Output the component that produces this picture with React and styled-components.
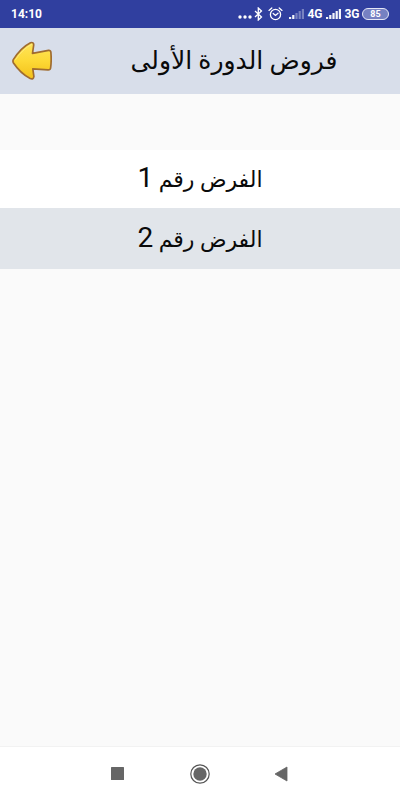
import React from 'react';
import styled, { createGlobalStyle } from 'styled-components';

const exams = [
  { id: 1, title: 'الفرض رقم' },
  { id: 2, title: 'الفرض رقم' },
];

const Signal = ({ level }) => (
  <svg width="17" height="12" viewBox="0 0 17 12" fill="#fff" aria-hidden="true">
    {[2, 4, 6, 8, 10].map((h, i) => (
      <rect key={h} x={1 + i * 3.2} y={11 - h} width="2.2" height={h} opacity={i < level ? 0.95 : 0.35} />
    ))}
  </svg>
);

const StatusBar = () => (
  <Status>
    <Clock>14:10</Clock>
    <StatusIcons>
      <svg width="16" height="12" viewBox="0 0 16 12" fill="#fff" aria-hidden="true">
        <circle cx="3" cy="9" r="1.7" />
        <circle cx="8" cy="9" r="1.7" />
        <circle cx="13" cy="9" r="1.7" />
      </svg>
      <svg width="11" height="14" viewBox="0 0 11 14" fill="none" stroke="#fff" strokeWidth="1.3" aria-hidden="true">
        <path d="M2 4l6.500 6-3.200 3V1l3.200 3L2 10" />
      </svg>
      <AlarmIcon width="15" height="14" viewBox="0 0 15 14" fill="none" stroke="#fff" strokeWidth="1.300" strokeLinecap="round" aria-hidden="true">
        <circle cx="7.500" cy="7.500" r="5.100" />
        <path d="M1 3.400L3.800 1M14 3.400L11.200 1M5.200 6.500l2.300 2 2.500-2.200" />
      </AlarmIcon>
      <Signal level={2} />
      <Network>4G</Network>
      <Signal level={5} />
      <Network>3G</Network>
      <Battery>85</Battery>
    </StatusIcons>
  </Status>
);

const BackArrow = () => (
  <svg width="40" height="40" viewBox="0 0 40 40" aria-hidden="true">
    <defs>
      <linearGradient id="gold" x1="0" y1="0" x2="0" y2="1">
        <stop offset="0" stopColor="#ffe55c" />
        <stop offset="0.5" stopColor="#fdd936" />
        <stop offset="1" stopColor="#f3c01a" />
      </linearGradient>
    </defs>
    <path
      d="M1.300 18.600Q9 6.500 18.500 1.700Q21.800.800 21.700 4L20.500 12.400L36.500 9.400Q38.900 9.200 38.900 11.500Q39.600 20 38.600 27Q38.300 29 36 28.900L20.800 27.800L21.900 35.500Q21.500 38.800 18.200 37.500Q8.500 32.500 1.500 22Q.500 20.200 1.300 18.600Z"
      fill="url(#gold)"
      stroke="#a06c30"
      strokeWidth="1.700"
      strokeLinejoin="round"
    />
    <path
      d="M3.200 19.200Q10.500 8 19.900 3.300"
      fill="none"
      stroke="#fff09a"
      strokeWidth="0.600"
    />
  </svg>
);

const App = () => (
  <>
    <GlobalStyle />
    <Screen>
      <StatusBar />
      <Header>
        <BackButton type="button" aria-label="رجوع"><BackArrow /></BackButton>
        <Title dir="rtl">فروض الدورة الأولى</Title>
      </Header>
      <List dir="rtl">
        {exams.map(({ id, title }) => (
          <li key={id}>
            <ExamButton type="button" $shaded={id % 2 === 0}>
              {title}
              {' '}
              <ExamNumber>{id}</ExamNumber>
            </ExamButton>
          </li>
        ))}
      </List>
      <NavBar>
        <NavButton type="button" aria-label="Recent apps">
          <svg width="22" height="22" viewBox="0 0 22 22">
            <rect x="4" y="4" width="13" height="13" rx="0.500" fill="#666" />
          </svg>
        </NavButton>
        <NavButton type="button" aria-label="Home">
          <svg width="22" height="22" viewBox="0 0 22 22">
            <circle cx="11" cy="11" r="9.200" fill="none" stroke="#555" strokeWidth="1.200" />
            <circle cx="11" cy="11" r="6.700" fill="#666" />
          </svg>
        </NavButton>
        <NavButton type="button" aria-label="Back">
          <svg width="22" height="22" viewBox="0 0 22 22">
            <path d="M4 11L16 4V18Z" fill="#666" stroke="#666" strokeWidth="0.800" strokeLinejoin="round" />
          </svg>
        </NavButton>
      </NavBar>
    </Screen>
  </>
);

const GlobalStyle = createGlobalStyle`
  * {
    box-sizing: border-box;
  }
  body {
    margin: 0;
    background-color: #fafafa;
    color: #0a0a0a;
    font-family: Roboto, "DejaVu Sans", sans-serif;
  }
  button {
    border: none;
    padding: 0;
    background: none;
    color: inherit;
    font-family: inherit;
    cursor: pointer;
  }
`;

const Screen = styled.div`
  display: flex;
  flex-direction: column;
  min-height: 100vh;
`;

const Status = styled.div`
  display: flex;
  align-items: center;
  justify-content: space-between;
  height: 28px;
  padding: 0 11px;
  background-color: #303f9f;
  color: #fff;
  font-size: 12px;
  font-weight: 700;
`;

const Clock = styled.span`
  font-size: 12px;
`;

const StatusIcons = styled.div`
  display: flex;
  align-items: center;
`;

const AlarmIcon = styled.svg`
  margin: 0 5px 0 4px;
`;

const Network = styled.span`
  width: 20px;
  text-align: center;
`;

const Battery = styled.span`
  width: 27px;
  height: 12px;
  border: 1px solid #e4e7f6;
  border-radius: 6px;
  background-color: #7681c2;
  font-size: 9px;
  line-height: 10px;
  text-align: center;
`;

const Header = styled.header`
  display: flex;
  align-items: center;
  height: 66px;
  padding: 0 12px;
  background-color: #d8deea;
`;

const BackButton = styled.button`
  display: flex;
`;

const Title = styled.h1`
  flex: 1;
  margin: 0;
  padding-left: 28px;
  font-size: 25px;
  font-weight: 400;
  line-height: 32px;
  text-align: center;
`;

const List = styled.ul`
  flex: 1;
  margin: 56px 0 0;
  padding: 0;
  list-style: none;
`;

const ExamButton = styled.button`
  display: block;
  width: 100%;
  height: ${({ $shaded }) => ($shaded ? '61px' : '58px')};
  background-color: ${({ $shaded }) => ($shaded ? '#e1e5ea' : '#fff')};
  font-size: 22px;
  line-height: 32px;
`;

const ExamNumber = styled.span`
  font-size: 28px;
`;

const NavBar = styled.nav`
  display: flex;
  align-items: center;
  justify-content: center;
  gap: 60px;
  height: 54px;
  border-top: 1px solid #f2f2f2;
  background-color: #fff;
`;

const NavButton = styled.button`
  display: flex;
`;

export default App;
